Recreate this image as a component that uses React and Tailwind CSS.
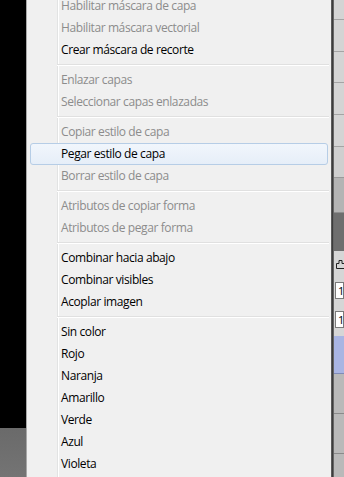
import React from 'react';

const groups = [
  [
    { label: 'Habilitar máscara de capa', disabled: true },
    { label: 'Habilitar máscara vectorial', disabled: true },
    { label: 'Crear máscara de recorte' },
  ],
  [
    { label: 'Enlazar capas', disabled: true },
    { label: 'Seleccionar capas enlazadas', disabled: true },
  ],
  [
    { label: 'Copiar estilo de capa', disabled: true },
    { label: 'Pegar estilo de capa', active: true },
    { label: 'Borrar estilo de capa', disabled: true },
  ],
  [
    { label: 'Atributos de copiar forma', disabled: true },
    { label: 'Atributos de pegar forma', disabled: true },
  ],
  [
    { label: 'Combinar hacia abajo' },
    { label: 'Combinar visibles' },
    { label: 'Acoplar imagen' },
  ],
  [
    { label: 'Sin color' },
    { label: 'Rojo' },
    { label: 'Naranja' },
    { label: 'Amarillo' },
    { label: 'Verde' },
    { label: 'Azul' },
    { label: 'Violeta' },
  ],
];

const MenuItem = ({ item }) => {
  if (item.active) {
    return (
      <div className="mx-[3px] flex h-[22px] items-center rounded-[3px] border border-[#b6cde6] bg-[linear-gradient(to_bottom,#f1f6fc,#e6eef8)] pl-[30px] text-black">
        {item.label}
      </div>
    );
  }
  return (
    <div
      className={`flex h-[22px] items-center pl-[34px] ${
        item.disabled ? 'text-[#8c8c8c]' : 'text-black'
      }`}
    >
      {item.label}
    </div>
  );
};

const Separator = () => (
  <div className="flex h-[8px] items-center pl-[30px] pr-[2px]">
    <div className="h-[2px] w-full border-t border-b border-t-[#e0e0e0] border-b-white" />
  </div>
);

const SidePanel = () => (
  <div className="flex w-[10px] flex-col">
    <div className="h-[20px] border-b border-[#a4a4a4] bg-[#d4d4d4]" />
    <div className="h-[32px] border-b border-[#a4a4a4] bg-[#d4d4d4]" />
    <div className="h-[31px] border-b border-[#a4a4a4] bg-[#d4d4d4]" />
    <div className="h-[32px] border-b border-[#a4a4a4] bg-[#d4d4d4]" />
    <div className="h-[32px] border-b border-[#a4a4a4] bg-[#d4d4d4]" />
    <div className="h-[31px] border-b border-[#9a9a9a] bg-[#cfcfcf]" />
    <div className="h-[35px] border-b border-[#8e8e8e] bg-[#b4b4b4]" />
    <div className="h-[38px] bg-[#6e6e6e]" />
    <div className="flex h-[85px] flex-col bg-[#d6d6d6] pl-[1px] pt-[9px]">
      <svg width="9" height="9" viewBox="0 0 9 9" className="ml-[1px]">
        <path d="M3 0.5h3v3h2.5v5h-8v-5h2.5z" fill="none" stroke="#222" />
      </svg>
      <div className="mt-[13px] flex h-[17px] items-center border border-[#7a7a7a] bg-white pl-[2px] text-[11px] leading-none text-black">
        10
      </div>
      <div className="mt-[12px] flex h-[17px] items-center border border-[#7a7a7a] bg-white pl-[2px] text-[11px] leading-none text-black">
        10
      </div>
    </div>
    <div className="h-[38px] border-b border-[#7f8bb8] bg-[#a9b5e3]" />
    <div className="h-[40px] border-b border-[#8a8a8a] bg-[#b9b9b9]" />
    <div className="h-[40px] border-b border-[#8a8a8a] bg-[#b9b9b9]" />
    <div className="flex-1 bg-[#b9b9b9]" />
  </div>
);

export default function App() {
  return (
    <div
      className="flex h-[477px] w-[344px] overflow-hidden bg-black text-[12px] tracking-[-0.4px]"
      style={{ fontFamily: '"Segoe UI", "Open Sans", "Noto Sans", sans-serif' }}
    >
      <div className="flex w-[26px] flex-col">
        <div className="h-[428px] bg-black" />
        <div className="flex-1 bg-[linear-gradient(to_bottom,#6a6a6a,#747474)]" />
      </div>
      <div className="w-[305px] overflow-hidden border-l border-[#a7a7a7] bg-[#f0f0f0] bg-[linear-gradient(to_right,#f0f0f0_30px,#e2e3e3_30px,#e2e3e3_31px,#ffffff_31px,#ffffff_32px,#f0f0f0_32px)]">
        <div className="-mt-[5px]">
          {groups.map((group, gi) => (
            <div key={gi}>
              {gi > 0 && <Separator />}
              {group.map((item) => (
                <MenuItem key={item.label} item={item} />
              ))}
            </div>
          ))}
        </div>
      </div>
      <div className="w-[3px] bg-[linear-gradient(to_right,#6a6a6a,#3c3c3c,#7a7a7a)]" />
      <SidePanel />
    </div>
  );
}
